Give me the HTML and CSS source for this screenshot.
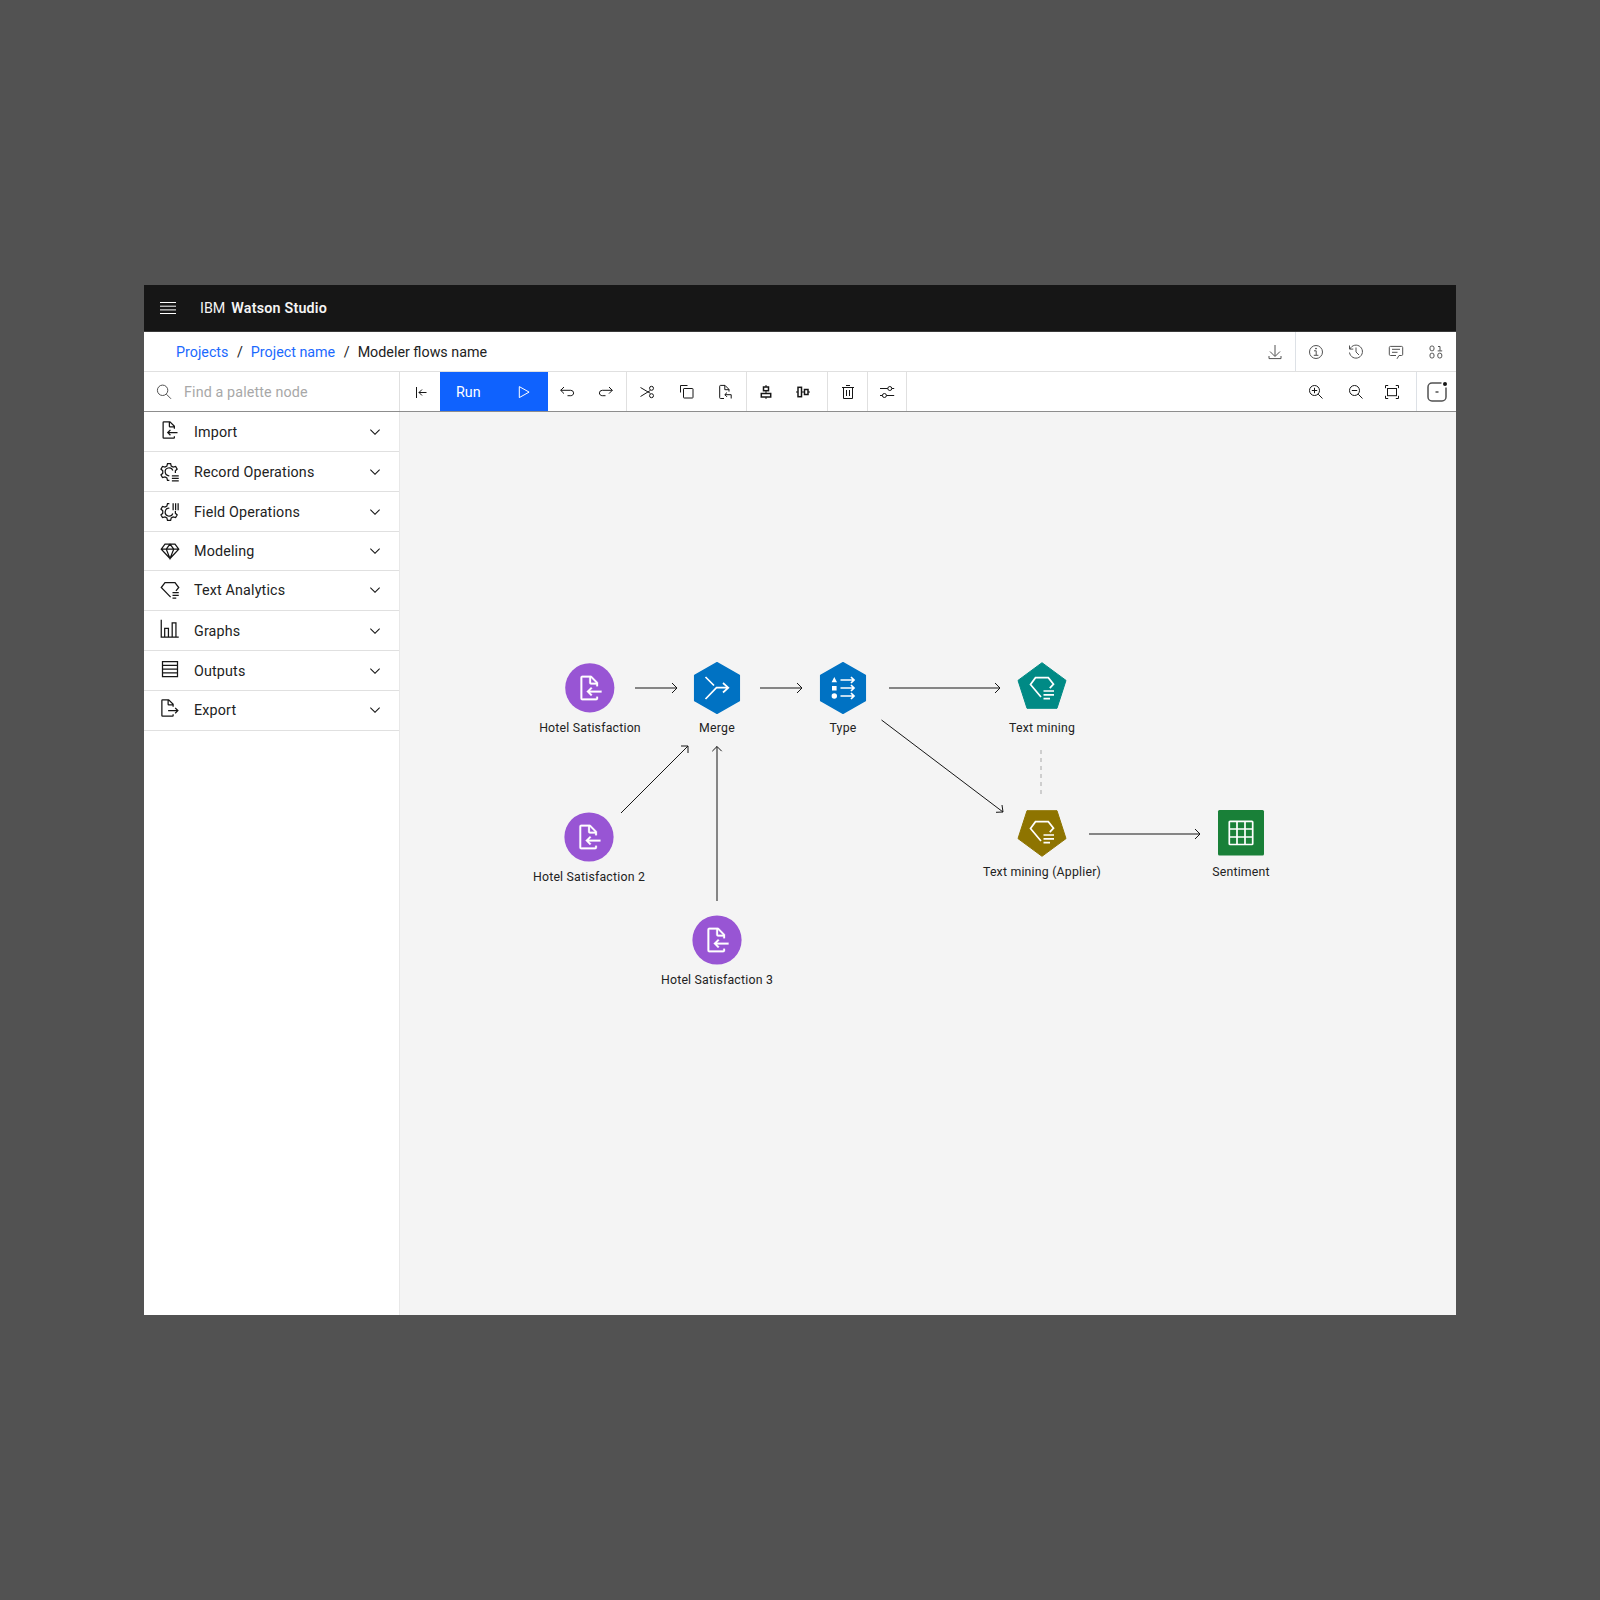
FILE: index.html
```html
<!DOCTYPE html>
<html lang="en"><head><meta charset="utf-8"><title>IBM Watson Studio</title><link rel="stylesheet" href="styles.css"></head>
<body>
<main class="window">
  <header class="topbar">
    <svg class="menu" width="16" height="12" viewBox="0 0 16 12"><path d="M0 .5h16M0 4.2h16M0 7.900h16M0 11.500h16"/></svg>
    <div class="brand"><span>IBM</span><b>Watson Studio</b></div>
  </header>
  <nav class="crumbs">
    <div class="trail"><a>Projects</a><i>/</i><a>Project name</a><i>/</i><span>Modeler flows name</span></div>
    <div class="cell"><svg viewBox="0 0 20 20"><path d="M10 3v11M5 9.500l5 5 5-5M4 14v2.600h12V14"/></svg></div>
    <div class="info-group">
      <div class="cell"><svg viewBox="0 0 20 20"><circle cx="10" cy="10" r="6.500"/><path d="M8 8.800h2.200v4.400M7.800 13.300h4.600"/><circle class="solid" cx="10" cy="6.600" r=".5"/></svg></div>
      <div class="cell"><svg viewBox="0 0 20 20"><path d="M3.500 3.500v3.600h3.800M4 7a6.500 6.500 0 1 1-.5 3.500M10 5.500V10l3 3"/></svg></div>
      <div class="cell"><svg viewBox="0 0 20 20"><path d="M11 16.800l2-3.300h2.500a1.200 1.200 0 0 0 1.200-1.200V5.600a1.200 1.200 0 0 0-1.200-1.200h-11a1.200 1.200 0 0 0-1.200 1.200v6.700a1.200 1.200 0 0 0 1.200 1.200H10M6 7.300h8M6 10.300h5.500"/></svg></div>
      <div class="cell"><svg viewBox="0 0 20 20"><rect x="4" y="4" width="4" height="4.800" rx="1.800"/><rect x="4" y="11.200" width="4" height="4.800" rx="1.800"/><rect x="11.800" y="11.200" width="4" height="4.800" rx="1.800"/><path d="M12 4.500h2v4.200M11.700 8.900h4.500"/></svg></div>
    </div>
  </nav>
  <div class="toolbar">
    <div class="search"><svg viewBox="0 0 20 20"><circle cx="8.600" cy="8.300" r="5.200"/><path d="M12.400 12.200L17 16.800"/></svg><span>Find a palette node</span></div>
    <div class="group collapse"><div class="cell"><svg viewBox="0 0 20 20"><path d="M5.500 5v11M8 10.500h7.500M11 7.500l-3 3 3 3"/></svg></div></div>
    <button class="run"><span>Run</span><svg viewBox="0 0 20 20"><path d="M5.300 4.600v11l9.800-5.500z"/></svg></button>
    <div class="group undo">
      <div class="cell"><svg viewBox="0 0 20 20"><path d="M7 5L3.700 8.300 7 11.600M3.700 8.300h10a2.900 2.900 0 0 1 2.900 2.600c0 1.600-1.200 2.800-2.900 2.800H10.500"/></svg></div>
      <div class="cell"><svg viewBox="0 0 20 20"><path d="M13 5l3.300 3.300L13 11.600M16.300 8.300h-10a2.900 2.900 0 0 0-2.900 2.600c0 1.600 1.200 2.800 2.900 2.800H9.500"/></svg></div>
    </div>
    <div class="group edit">
      <div class="cell"><svg viewBox="0 0 20 20"><path d="M3.500 5.500l9.800 5.800M3.500 14.500l9.800-6"/><circle cx="14.500" cy="6.300" r="2"/><circle cx="14.500" cy="13.700" r="2"/></svg></div>
      <div class="cell"><svg viewBox="0 0 20 20"><rect x="6.500" y="6.500" width="9.500" height="9.500" rx=".6"/><path d="M3.500 10.500v-7h7"/></svg></div>
      <div class="cell"><svg viewBox="0 0 20 20"><path d="M8 16.500H4.500a.8.8 0 0 1-.8-.8V4.200a.8.8 0 0 1 .8-.8H9l4 4v2.200M8.800 3.500v4.200H13M11 10.500l-2.200 2.200 2.200 2.200M9 12.700h6.200v3.800"/></svg></div>
    </div>
    <div class="group align">
      <div class="cell"><svg viewBox="0 0 20 20"><rect class="bold" x="7.500" y="5" width="5" height="3.700"/><rect class="bold" x="5.300" y="11.500" width="9.400" height="3.500"/><path d="M10 3v2M10 8.700v2.800M10 15v2"/></svg></div>
      <div class="cell"><svg viewBox="0 0 20 20"><rect class="bold" x="5" y="5.300" width="3.500" height="9.400"/><rect class="bold" x="11.500" y="7.500" width="3.500" height="5"/><path d="M3 10h2M8.500 10h3M15 10h2"/></svg></div>
    </div>
    <div class="group trash"><div class="cell"><svg viewBox="0 0 20 20"><path d="M4 5.500h12M8 3.500h4M5.500 5.500v11h9v-11M8.500 8v6M11.500 8v6"/></svg></div></div>
    <div class="group settings"><div class="cell"><svg viewBox="0 0 20 20"><path d="M3 6.500h7.800M14.800 6.500h2.400M3 13.500h2.400M9.400 13.500h7.800"/><circle cx="12.800" cy="6.500" r="2"/><circle cx="7.400" cy="13.500" r="2"/></svg></div></div>
    <div class="zooms">
      <div class="cell"><svg viewBox="0 0 20 20"><circle cx="8.500" cy="8.500" r="5"/><path d="M12.200 12.200l4.300 4.300M5.800 8.500h5.400M8.500 5.800v5.400"/></svg></div>
      <div class="cell"><svg viewBox="0 0 20 20"><circle cx="8.500" cy="8.500" r="5"/><path d="M12.200 12.200l4.300 4.300M5.800 8.500h5.400"/></svg></div>
      <div class="cell fit"><svg viewBox="0 0 20 20"><rect x="5.500" y="6.500" width="9" height="7.200"/><path d="M3.500 6.200V3.500h2.700M13.800 3.500h2.700v2.700M16.500 13.800v2.700h-2.700M6.200 16.500H3.500v-2.700"/></svg></div>
    </div>
    <div class="notes"><svg width="20" height="20" viewBox="0 0 20 20"><path d="M14.500 1H5a4 4 0 0 0-4 4v10a4 4 0 0 0 4 4h10a4 4 0 0 0 4-4V5.500M8.500 10h3"/><circle cx="18" cy="2" r="2"/></svg></div>
  </div>
  <div class="work">
    <aside class="palette">
      <div class="row"><svg class="up" viewBox="0 0 32 32"><use href="#import"/></svg><span>Import</span><svg class="chev" viewBox="0 0 16 16"><use href="#chev"/></svg></div>
      <div class="row"><svg viewBox="0 0 32 32"><use href="#gear"/><path class="line" d="M19 22h11M19 26h11M19 30h11"/></svg><span>Record Operations</span><svg class="chev" viewBox="0 0 16 16"><use href="#chev"/></svg></div>
      <div class="row"><svg viewBox="0 0 32 32"><use href="#gear" transform="matrix(1 0 0 -1 0 32)"/><path class="line" d="M21 2v11M25 2v11M29 2v11"/></svg><span>Field Operations</span><svg class="chev" viewBox="0 0 16 16"><use href="#chev"/></svg></div>
      <div class="row short"><svg viewBox="0 0 32 32"><path class="line" d="M8 5h16l6 8-14 15L2 13zM2 13h28M16 5l-6 8 6 15 6-15z"/></svg><span>Modeling</span><svg class="chev" viewBox="0 0 16 16"><use href="#chev"/></svg></div>
      <div class="row raised"><svg viewBox="0 0 32 32"><use href="#mining"/></svg><span>Text Analytics</span><svg class="chev" viewBox="0 0 16 16"><use href="#chev"/></svg></div>
      <div class="row"><svg class="up" viewBox="0 0 32 32"><path class="line" d="M2 1v28h28M7.500 29V15h6v14M19.500 29V6h6v23"/></svg><span>Graphs</span><svg class="chev" viewBox="0 0 16 16"><use href="#chev"/></svg></div>
      <div class="row"><svg class="up2" viewBox="0 0 32 32"><path class="line" d="M4 4h24v24H4zM4 10h24M4 16h24M4 22h24"/></svg><span>Outputs</span><svg class="chev" viewBox="0 0 16 16"><use href="#chev"/></svg></div>
      <div class="row raised"><svg class="up2" viewBox="0 0 32 32"><path d="M13 21h13.170l-2.580 2.590L25 25l5-5-5-5-1.410 1.410L26.170 19H13zM22 14v-4a1 1 0 0 0-.29-.71l-7-7A1 1 0 0 0 14 2H4a2 2 0 0 0-2 2v24a2 2 0 0 0 2 2h16a2 2 0 0 0 2-2v-2h-2v2H4V4h8v6a2 2 0 0 0 2 2h6v2zm-8-4V4.410L19.590 10z"/></svg><span>Export</span><svg class="chev" viewBox="0 0 16 16"><use href="#chev"/></svg></div>
    </aside>
    <section class="canvas">
      <svg class="flow" viewBox="400 412 1056 903">
        <defs>
          <path id="chev" d="M8 11L3 6l.7-.7L8 9.600l4.300-4.300.7.7z"/>
          <path id="import" d="M28 19H14.830l2.580-2.590L16 15l-5 5 5 5 1.410-1.410L14.830 21H28zM24 14v-4a1 1 0 0 0-.29-.71l-7-7A1 1 0 0 0 16 2H6a2 2 0 0 0-2 2v24a2 2 0 0 0 2 2h16a2 2 0 0 0 2-2v-2h-2v2H6V4h8v6a2 2 0 0 0 2 2h6v2zm-8-4V4.410L21.590 10z"/>
          <path id="gear" class="line" d="M15 29.500h-3l-1-4-3-1.700-4 1.200-2.500-4.300 2.900-2.900v-3.600L1.500 11.300 4 7l4 1.200 3-1.700 1-4h5l1 4 3 1.700L25 7l2.500 4.300-2.900 2.900v3.300M15 22a6.300 6.300 0 1 1 5.500-8.500"/>
          <path id="mining" class="line" d="M17 27.500L2 12l6-8h16l6 8-4.500 5.500M20 20h10M20 24.500h10M20 29h6"/>
        </defs>
        <g class="edges">
          <path d="M635 688h42M672 683l5 5-5 5"/>
          <path d="M760 688h42M797 683l5 5-5 5"/>
          <path d="M889 688h111M995 683l5 5-5 5"/>
          <path d="M621 813L688 746M681 746h7v7"/>
          <path d="M717 901V746.500M712.300 751.200l4.700-4.700 4.700 4.700"/>
          <path d="M881.500 720L1003 812M996 812.300l7-.3-1-7"/>
          <path d="M1089 834h111M1195 829l5 5-5 5"/>
          <path class="dashed" d="M1041 750v44"/>
        </g>
        <g class="purple"><circle cx="589.800" cy="687.800" r="24.600"/><circle cx="589" cy="837" r="24.600"/><circle cx="717" cy="940" r="24.600"/></g>
        <g class="blue"><path d="M717 662.700l22.300 12.600v25.400L717 713.300l-22.300-12.600v-25.400z"/><path d="M843 662.700l22.300 12.600v25.400L843 713.300l-22.300-12.600v-25.400z"/></g>
        <path class="teal" d="M1042 662.700l24 17.700-9 27.900h-30l-9-27.900z"/>
        <path class="olive" d="M1042 856.300l24-17.700-9-27.900h-30l-9 27.900z"/>
        <rect class="green" x="1218" y="810" width="46" height="45.500" rx="1.500"/>
        <g class="glyphs">
          <use class="doc" href="#import" transform="translate(577 674) scale(.875)"/>
          <use class="doc" href="#import" transform="translate(575.900 823) scale(.875)"/>
          <use class="doc" href="#import" transform="translate(704 926) scale(.875)"/>
          <path d="M705.500 677l8.500 8.500M705.500 699l11-11.300h12M723 683l5.300 4.700-5.300 4.800"/>
          <path d="M840.500 680h13M851 677l3 3-3 3M840.500 688h13M851 685l3 3-3 3M840.500 696h13M851 693l3 3-3 3"/>
          <path class="white" d="M834.300 677l2.700 5.200h-5.400zM832 686h4.600v4.500H832z"/><circle class="white" cx="834.300" cy="696" r="2.700"/>
          <path id="gem" d="M1041 697l-10.500-12.500 5-6.800h12.800l5.200 6.500-3.700 4M1043.500 691h10.500M1043.500 694.900h10.500M1043.500 698.700h6.500"/>
          <use href="#gem" y="144"/>
          <rect x="1229.300" y="821.300" width="23.400" height="23.200" rx=".8"/><path d="M1237 821v23.500M1245 821v23.500M1229 829h24M1229 837h24"/>
        </g>
      </svg>
      <span class="label l1">Hotel Satisfaction</span><span class="label l2">Merge</span><span class="label l3">Type</span><span class="label l4">Text mining</span>
      <span class="label l5">Text mining (Applier)</span><span class="label l6">Sentiment</span><span class="label l7">Hotel Satisfaction 2</span><span class="label l8">Hotel Satisfaction 3</span>
    </section>
  </div>
</main>
</body></html>
```
FILE: styles.css
```css
*{box-sizing:border-box}
body{margin:0;background:#525252;color:#222;font:14.300px/20px Roboto,"Liberation Sans",sans-serif;padding:285px 144px 0}
svg{display:block;fill:none;stroke:#161616;stroke-width:1;flex:none}
.window{width:1312px;height:1030px;background:#fff;display:flex;flex-direction:column}
.topbar{height:47px;background:#161616;display:flex;align-items:center;padding-left:16px;gap:24px;color:#f4f4f4;border-bottom:1px solid #393939}
.menu{stroke:#fff}
.brand{display:flex;gap:6px}
.brand b{font-weight:600;letter-spacing:.2px}
.crumbs{height:40px;display:flex;border-bottom:1px solid #e0e0e0}
.trail{flex:1;display:flex;align-items:center;padding-left:32px}
.trail a{color:#1b69fe}
.trail i{font-style:normal;margin:0 8px 0 8.500px}
.cell{width:40px;display:flex;align-items:center;justify-content:center}
.cell svg,.search svg,.run svg{width:20px;height:20px}
.crumbs svg{stroke:#525252}
.info-group{display:flex;border-left:1px solid #dde1e6}
.toolbar{height:40px;display:flex;border-bottom:1px solid #8d8d8d}
.search{width:256px;display:flex;align-items:center;padding-left:10px;gap:10px;border-right:1px solid #e0e0e0;color:#a8a8a8;letter-spacing:.13px}
.search svg{stroke:#525252}
.group{display:flex;border-right:1px solid #e0e0e0}
.group.collapse{width:40px;border:0;padding-left:1px}
.run{width:108px;border:0;background:#0f62fe;color:#fff;font:inherit;display:flex;align-items:center;justify-content:space-between;padding:0 14px 0 16px}
.run svg{stroke:#fff}
.undo{width:79px}
.undo .cell:first-child{width:38px}
.edit{width:120px}
.align{width:81px}
.align .cell{width:37.500px}
.trash{width:40px}
.settings{width:39px}
.bold{stroke-width:1.500}
.solid{fill:#525252}
.zooms{margin-left:auto;display:flex}
.fit{padding-right:8px}
.notes{width:40px;border-left:1px solid #dde1e6;display:flex;align-items:center;justify-content:center}
.notes svg{overflow:visible;stroke-width:1.500;stroke:#525252}
.notes circle{fill:#161616;stroke:none}
.work{flex:1;display:flex}
.palette{width:256px;border-right:1px solid #e8e8e8;letter-spacing:.16px}
.row{height:40px;display:flex;align-items:center;border-bottom:1px solid #e0e0e0;padding:0 16px;gap:14px}
.row.short{height:39px}
.row.raised{padding-bottom:2px}
.row>svg{width:20px;height:20px;fill:#161616;stroke:none}
.row .line,.line{fill:none;stroke:#161616;stroke-width:2}
.row .chev{width:16px;height:16px;margin-left:auto}
.row .up{margin-bottom:3px}
.row .up2{margin-bottom:4px}
.canvas{flex:1;background:#f4f4f4;position:relative}
.flow{width:1056px;height:903px}
.dashed{stroke:#a8a8a8;stroke-dasharray:4 4}
.purple{fill:#9855d4;stroke:none}
.blue{fill:#0072c3;stroke:#0072c3;stroke-width:1.500;stroke-linejoin:round}
.teal{fill:#008a85;stroke:#008a85;stroke-linejoin:round}
.olive{fill:#8e7400;stroke:#8e7400;stroke-linejoin:round}
.green{fill:#198038;stroke:none}
.glyphs{stroke:#fff;stroke-width:1.700}
.doc{fill:#fff;stroke-width:.3}
.white{fill:#fff;stroke:none}
.label{position:absolute;font-size:12.300px;line-height:16px;letter-spacing:.21px;white-space:nowrap;transform:translateX(-50%)}
.l1{left:190px;top:308px}
.l2{left:317px;top:308px}
.l3{left:443px;top:308px}
.l4{left:642px;top:308px}
.l5{left:642px;top:452px}
.l6{left:841px;top:452px}
.l7{left:189px;top:457px}
.l8{left:317px;top:560px}
```
